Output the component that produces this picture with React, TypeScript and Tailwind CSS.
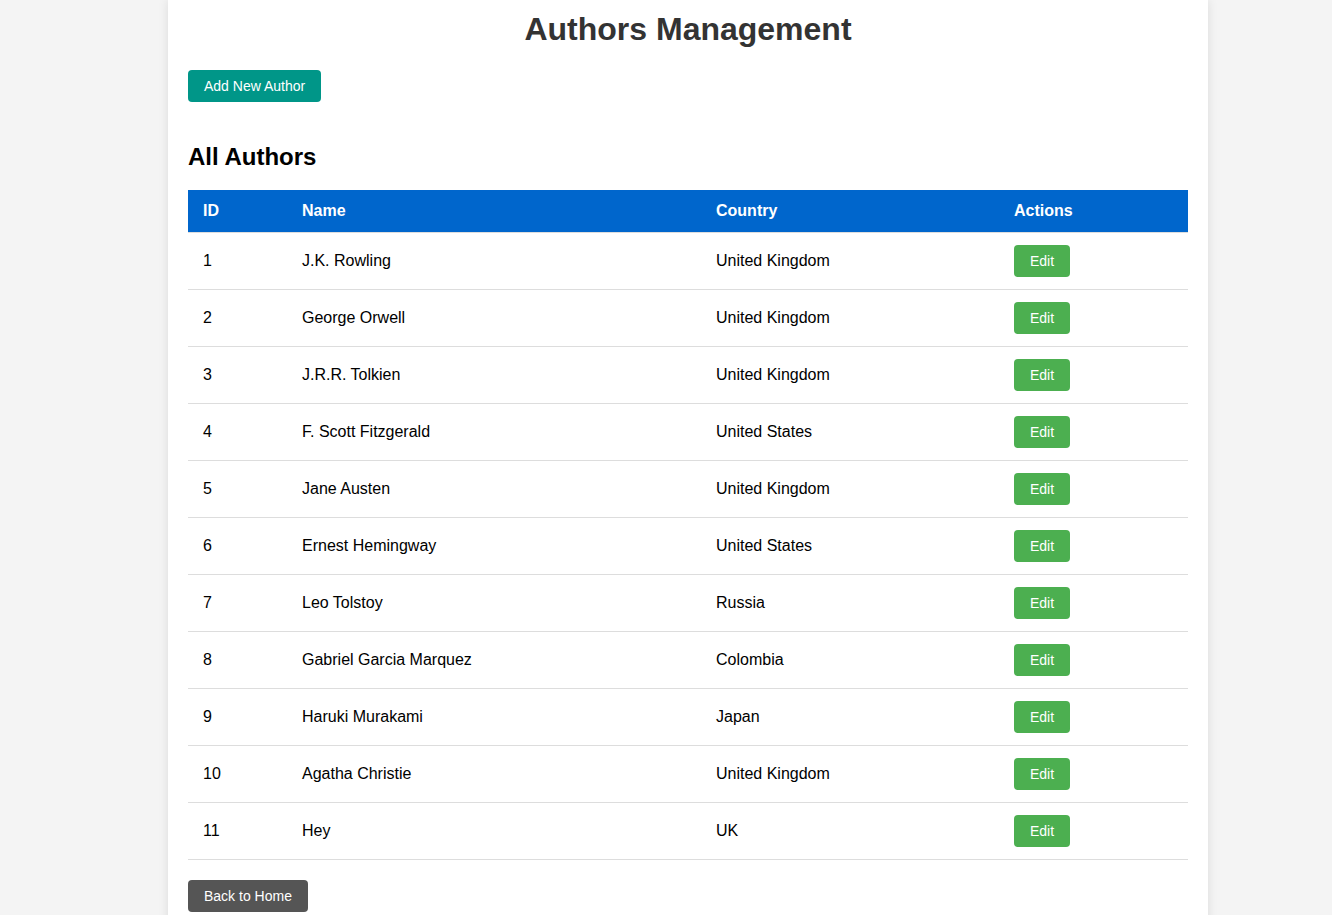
const authors = [
  { id: 1, name: 'J.K. Rowling', country: 'United Kingdom' },
  { id: 2, name: 'George Orwell', country: 'United Kingdom' },
  { id: 3, name: 'J.R.R. Tolkien', country: 'United Kingdom' },
  { id: 4, name: 'F. Scott Fitzgerald', country: 'United States' },
  { id: 5, name: 'Jane Austen', country: 'United Kingdom' },
  { id: 6, name: 'Ernest Hemingway', country: 'United States' },
  { id: 7, name: 'Leo Tolstoy', country: 'Russia' },
  { id: 8, name: 'Gabriel Garcia Marquez', country: 'Colombia' },
  { id: 9, name: 'Haruki Murakami', country: 'Japan' },
  { id: 10, name: 'Agatha Christie', country: 'United Kingdom' },
  { id: 11, name: 'Hey', country: 'UK' },
];

export default function App() {
  return (
    <div className="min-h-screen bg-[#f4f4f4] font-['Liberation_Sans',Arial,sans-serif]">
      <div className="ml-[168px] w-[1040px] bg-white px-5 pt-[11px] pb-5 shadow-[0_0_10px_rgba(0,0,0,0.1)]">
        <h1 className="mb-[22px] text-center text-[32px] leading-[37px] font-bold text-[#333]">
          Authors Management
        </h1>

        <div>
          <button className="rounded bg-[#009688] px-4 py-2 text-sm leading-4 text-white">
            Add New Author
          </button>
        </div>

        {/* Author list */}
        <h2 className="mt-[41px] mb-[19px] text-2xl leading-7 font-bold text-black">All Authors</h2>

        <table className="w-full border-collapse text-base text-black">
          <thead>
            <tr className="border-b border-[#ddd] bg-[#0066cc] text-left text-white">
              <th className="w-[99px] px-[15px] py-3 leading-[18px] font-bold">ID</th>
              <th className="w-[414px] px-[15px] py-3 leading-[18px] font-bold">Name</th>
              <th className="w-[298px] px-[15px] py-3 leading-[18px] font-bold">Country</th>
              <th className="px-[15px] py-3 leading-[18px] font-bold">Actions</th>
            </tr>
          </thead>
          <tbody>
            {authors.map((a) => (
              <tr key={a.id} className="border-b border-[#ddd]">
                <td className="px-[15px] py-3">{a.id}</td>
                <td className="px-[15px] py-3">{a.name}</td>
                <td className="px-[15px] py-3">{a.country}</td>
                <td className="px-[15px] py-3">
                  <button className="rounded bg-[#4caf50] px-4 py-2 text-sm leading-4 text-white">
                    Edit
                  </button>
                </td>
              </tr>
            ))}
          </tbody>
        </table>

        <button className="mt-5 rounded bg-[#555] px-4 py-2 text-sm leading-4 text-white">
          Back to Home
        </button>
      </div>
    </div>
  );
}
